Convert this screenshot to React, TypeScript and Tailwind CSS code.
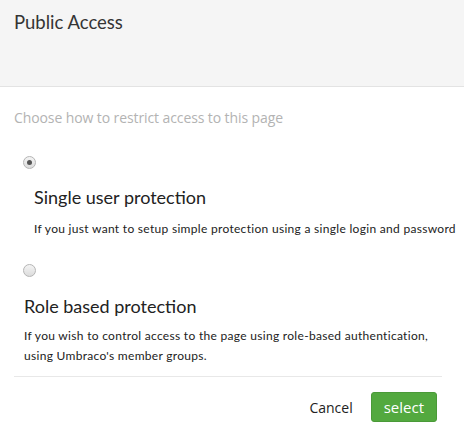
import React, { useState } from "react";

const Radio = ({ checked, onClick }: { checked: boolean; onClick: () => void }) => (
  <button
    type="button"
    onClick={onClick}
    className="w-[13px] h-[13px] rounded-full border border-[#b5b5b5] bg-gradient-to-b from-[#f4f4f4] to-[#dcdcdc] flex items-center justify-center"
  >
    {checked && <span className="w-[5px] h-[5px] rounded-full bg-[#555]" />}
  </button>
);

export default function App() {
  const [mode, setMode] = useState<"single" | "role">("single");

  return (
    <div className="w-[464px] h-[435px] bg-white font-['Open_Sans',sans-serif] text-[#333] overflow-hidden">
      {/* Header */}
      <div className="h-[87px] bg-[#f5f5f5] border-b border-[#e3e3e3] px-[14px] pt-[9px]">
        <h1 className="text-[18.5px] leading-[26px] text-[#343434] font-['Lato',sans-serif]">Public Access</h1>
      </div>

      <div className="px-[14px]">
        <p className="mt-[21px] text-[14px] leading-[20px] text-[#b3b3b3] tracking-[-0.1px]">
          Choose how to restrict access to this page
        </p>

        {/* Single user */}
        <div className="pl-[9px] mt-[28px] flex">
          <Radio checked={mode === "single"} onClick={() => setMode("single")} />
        </div>
        <div className="pl-[20px] font-['Lato',sans-serif]">
          <h3 className="mt-[17px] text-[18px] leading-[22px] text-[#222]">Single user protection</h3>
          <p className="mt-[11px] text-[12px] leading-[20px] text-[#222] tracking-[0.3px] whitespace-nowrap">
            If you just want to setup simple protection using a single login and password
          </p>
        </div>

        {/* Role based */}
        <div className="pl-[9px] mt-[25px] flex">
          <Radio checked={mode === "role"} onClick={() => setMode("role")} />
        </div>
        <div className="pl-[10px] font-['Lato',sans-serif]">
          <h3 className="mt-[18px] text-[18px] leading-[22px] text-[#222]">Role based protection</h3>
          <p className="mt-[9px] text-[12px] leading-[20px] text-[#222] tracking-[0.3px]">
            If you wish to control access to the page using role-based authentication,
            <br />
            using Umbraco's member groups.
          </p>
        </div>

        <div className="mt-[10px] border-t border-[#e8e8e8] mr-[8px]" />

        {/* Footer */}
        <div className="flex items-center justify-end gap-[18px] pr-[13px] mt-[15px]">
          <button type="button" className="text-[14px] text-[#222]">Cancel</button>
          <button
            type="button"
            className="h-[30px] px-[12px] rounded-[3px] bg-[#53a93f] text-white text-[15px] border border-[#4a9a38]"
          >
            select
          </button>
        </div>
      </div>
    </div>
  );
}
